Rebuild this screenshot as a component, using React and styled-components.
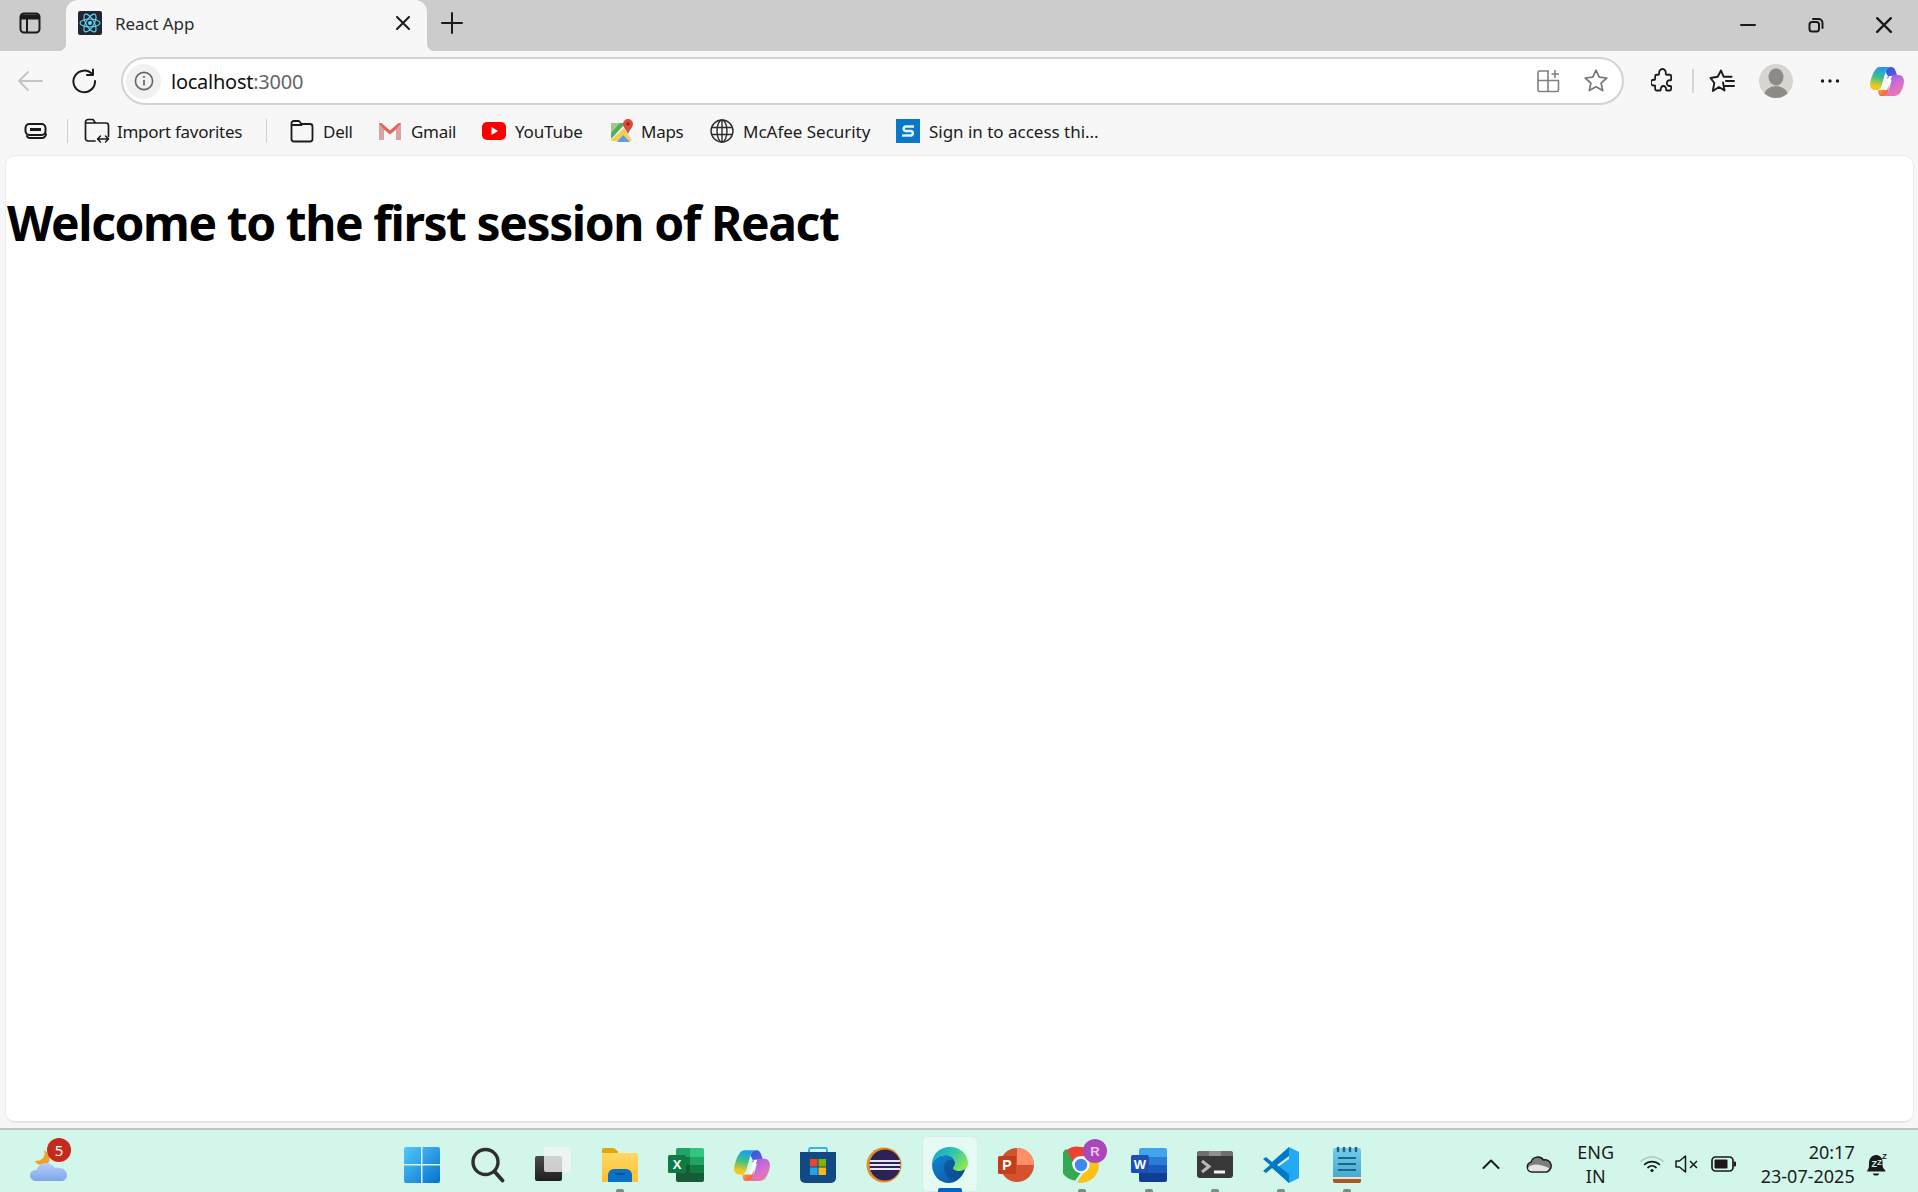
import React from "react";
import styled, { createGlobalStyle } from "styled-components";

const Global = createGlobalStyle`
  html, body { margin: 0; padding: 0; height: 100%; background: #f7f7f7; }
  body { font-family: "Noto Sans", "Open Sans", sans-serif; overflow: hidden; }
`;

const Page = styled.div`
  height: 1192px;
  display: flex;
  flex-direction: column;
`;

const TitleBar = styled.div`
  height: 51px;
  background: #cccccc;
  display: flex;
  align-items: stretch;
  flex: none;
`;

const Slot = styled.div`
  width: ${(p) => p.$w}px;
  margin-left: ${(p) => p.$ml || 0}px;
  margin-right: ${(p) => p.$mr || 0}px;
  padding-bottom: ${(p) => p.$pb || 0}px;
  flex: none;
  display: flex;
  align-items: center;
  justify-content: center;
`;

const Tab = styled.div`
  width: 361px;
  margin-left: 6px;
  background: #f7f7f7;
  border-radius: 12px 12px 0 0;
  display: flex;
  align-items: center;
  padding: 0 0 5px 12px;
  box-sizing: border-box;
  position: relative;
  &::before, &::after {
    content: "";
    position: absolute;
    bottom: 0;
    width: 8px;
    height: 8px;
  }
  &::before { left: -8px; background: radial-gradient(circle at 0 0, transparent 8px, #f7f7f7 8.5px); }
  &::after { right: -8px; background: radial-gradient(circle at 100% 0, transparent 8px, #f7f7f7 8.5px); }
`;

const TabTitle = styled.span`
  margin-left: 13px;
  flex: 1;
  font-size: 17px;
  color: #2b2b2b;
  letter-spacing: -0.1px;
`;

const WindowControls = styled.div`
  margin-left: auto;
  display: flex;
`;

const Toolbar = styled.div`
  height: 56px;
  flex: none;
  display: flex;
  align-items: center;
  padding: 4px 4px 0 3px;
  box-sizing: border-box;
`;

const AddressBar = styled.div`
  width: 1503px;
  height: 48px;
  margin-left: 10px;
  flex: none;
  box-sizing: border-box;
  background: #fff;
  border: 2px solid #d2d2d2;
  border-radius: 24px;
  display: flex;
  align-items: center;
  padding-left: 3px;
`;

const InfoBadge = styled.div`
  width: 35px;
  height: 35px;
  border-radius: 50%;
  background: #f1f1f1;
  display: flex;
  align-items: center;
  justify-content: center;
  flex: none;
`;

const Url = styled.div`
  margin-left: 10px;
  font-size: 20px;
  color: #111;
  letter-spacing: -0.25px;
  span { color: #666; }
`;

const AddressIcons = styled.div`
  margin-left: auto;
  display: flex;
`;

const ToolbarSep = styled.div`
  width: 2px;
  height: 24px;
  margin-left: 8px;
  background: #d5d5d5;
  flex: none;
`;

const BookmarkBar = styled.div`
  height: 48px;
  flex: none;
  display: flex;
  align-items: center;
  padding-left: 24px;
`;

const BarSep = styled.div`
  width: 1px;
  height: 24px;
  background: #cfcfcf;
  margin: 0 ${(p) => p.$r}px 0 ${(p) => p.$l}px;
  flex: none;
`;

const Bookmark = styled.div`
  width: ${(p) => p.$w}px;
  flex: none;
  display: flex;
  align-items: center;
  gap: ${(p) => p.$gap || 9}px;
  font-size: 17px;
  color: #1c1c1c;
  letter-spacing: ${(p) => p.$ls ?? -0.28}px;
  white-space: nowrap;
`;

const Content = styled.main`
  flex: 1;
  margin: 0 4px 5px 5px;
  background: #fff;
  border: 1px solid #ececec;
  border-bottom: 2px solid #e6e6e6;
  border-radius: 10px;
  overflow: hidden;
`;

const Heading = styled.h1`
  margin: 34px 0 0;
  padding-left: 1px;
  font-size: 48px;
  line-height: 65px;
  font-weight: 700;
  color: #000;
  letter-spacing: -1.42px;
  white-space: nowrap;
`;

const Taskbar = styled.footer`
  height: 64px;
  flex: none;
  box-sizing: border-box;
  background: #d3f6ea;
  border-top: 2px solid #b5c9c1;
  display: flex;
  align-items: stretch;
`;

const WeatherArea = styled.div`
  width: 389px;
  flex: none;
  padding: 18px 0 0 30px;
  box-sizing: border-box;
`;

const Weather = styled.div`
  width: 40px;
  height: 36px;
  position: relative;
`;

const Badge = styled.span`
  position: absolute;
  left: 17px;
  top: -10px;
  width: 24px;
  height: 24px;
  border-radius: 50%;
  background: #c42b1c;
  color: #fff;
  font-size: 15px;
  line-height: 24px;
  text-align: center;
`;

const TaskButton = styled.div`
  width: 66.05px;
  flex: none;
  position: relative;
  display: flex;
  align-items: center;
  justify-content: center;
  padding-top: 7px;
  box-sizing: border-box;
  ${(p) =>
    p.$active &&
    `&::before {
      content: "";
      position: absolute;
      left: 5px;
      right: 5px;
      top: 6px;
      bottom: 0;
      background: #e6faf4;
      border: 1px solid #d8efe7;
      border-radius: 6px;
      box-sizing: border-box;
    }`}
  svg { position: relative; }
`;

const RunDot = styled.span`
  position: absolute;
  bottom: 0;
  left: 50%;
  height: ${(p) => (p.$active ? 4 : 3)}px;
  width: ${(p) => (p.$active ? 24 : 8)}px;
  margin-left: ${(p) => (p.$active ? -12 : -4)}px;
  background: ${(p) => (p.$active ? "#0067c0" : "#7f8c88")};
  border-radius: 2px 2px 0 0;
`;

const Tray = styled.div`
  flex: 1;
  display: flex;
  align-items: stretch;
  padding-top: 5px;
`;

const TrayText = styled.div`
  width: ${(p) => p.$w}px;
  flex: none;
  display: flex;
  flex-direction: column;
  justify-content: center;
  text-align: ${(p) => p.$align};
  font-size: 18px;
  line-height: 24px;
  color: #1c1c1c;
  white-space: nowrap;
`;

const line = { fill: "none", stroke: "#1a1a1a", strokeWidth: 2, strokeLinecap: "round", strokeLinejoin: "round" };

const SidebarIcon = () => (
  <svg width="22" height="22" viewBox="0 0 22 22">
    <rect x="1.500" y="1.500" width="19" height="19" rx="3.500" {...line} />
    <path d="M2 2.500h18v5H2z" fill="#1a1a1a" />
    <path d="M8 7v13" {...line} />
  </svg>
);

const ReactFavicon = () => (
  <svg width="24" height="24" viewBox="0 0 24 24">
    <rect width="24" height="24" rx="2" fill="#23272f" />
    <g fill="none" stroke="#61dafb" strokeWidth="1.100">
      <ellipse cx="12" cy="12" rx="10" ry="4" />
      <ellipse cx="12" cy="12" rx="10" ry="4" transform="rotate(60 12 12)" />
      <ellipse cx="12" cy="12" rx="10" ry="4" transform="rotate(120 12 12)" />
    </g>
    <circle cx="12" cy="12" r="2" fill="#61dafb" />
  </svg>
);

const CloseIcon = ({ size = 14 }) => (
  <svg width={size} height={size} viewBox="0 0 14 14">
    <path d="M1 1l12 12M13 1L1 13" {...line} />
  </svg>
);

const PlusIcon = () => (
  <svg width="22" height="22" viewBox="0 0 22 22">
    <path d="M11 1v20M1 11h20" {...line} />
  </svg>
);

const MinIcon = () => (
  <svg width="16" height="4" viewBox="0 0 16 4">
    <path d="M1 2h14" {...line} />
  </svg>
);

const RestoreIcon = () => (
  <svg width="16" height="16" viewBox="0 0 16 16">
    <rect x="1.500" y="5" width="9.500" height="9.500" rx="2.500" {...line} />
    <path d="M5 2h5.500A4 4 0 0 1 14.500 6v5" {...line} />
  </svg>
);

const BackIcon = () => (
  <svg width="26" height="22" viewBox="0 0 26 22">
    <path d="M25 11H2M11 2l-9 9 9 9" fill="none" stroke="#c4c4c4" strokeWidth="1.800" strokeLinecap="round" strokeLinejoin="round" />
  </svg>
);

const ReloadIcon = () => (
  <svg width="26" height="26" viewBox="0 0 26 26">
    <path d="M21.500 6.500A10.800 10.800 0 1 0 24 13" {...line} />
    <path d="M22 1.500v5.500h-6" {...line} />
  </svg>
);

const InfoIcon = () => (
  <svg width="20" height="20" viewBox="0 0 20 20">
    <circle cx="10" cy="10" r="8.600" fill="none" stroke="#666" strokeWidth="1.600" />
    <path d="M10 9v5.500" stroke="#666" strokeWidth="1.700" />
    <circle cx="10" cy="6" r="1.100" fill="#666" />
  </svg>
);

const TilesIcon = () => (
  <svg width="24" height="24" viewBox="0 0 24 24" fill="none" stroke="#808080" strokeWidth="1.600" strokeLinejoin="round">
    <path d="M13 2H3.500A1.500 1.500 0 0 0 2 3.500V21a1.500 1.500 0 0 0 1.500 1.500H21a1.500 1.500 0 0 0 1.500-1.500V11.500H2M12 2v20.500" />
    <path d="M19 1v8M15.500 5h7.500" />
  </svg>
);

const StarIcon = ({ color = "#777" }) => (
  <svg width="26" height="26" viewBox="0 0 26 26">
    <path d="M13 2.200l3.200 7 7.600.8-5.700 5.100 1.600 7.500L13 18.800l-6.700 3.800 1.600-7.500L2.200 10l7.600-.8z" fill="none" stroke={color} strokeWidth="1.700" strokeLinejoin="round" />
  </svg>
);

const PuzzleIcon = () => (
  <svg width="22" height="26" viewBox="0 0 24 26" preserveAspectRatio="none">
    <path d="M9 5.500a3.600 3.600 0 1 1 7 0c0 .8.5 1.200 1 1.200h3.500A1.500 1.500 0 0 1 22 8.200v3.300c0 .6-.6 1-1.100.8a2.900 2.900 0 1 0 0 5.600c.5-.2 1.100.2 1.100.8v2.300a1.500 1.500 0 0 1-1.500 1.500h-3.200c-.6 0-1-.5-.9-1a2.900 2.900 0 1 0-5.700 0c.1.5-.3 1-.9 1H6a1.500 1.500 0 0 1-1.500-1.500v-2.800c0-.5-.5-1-1-.8a2.900 2.900 0 1 1 0-5.600c.5.2 1-.3 1-.8V8.200A1.500 1.500 0 0 1 6 6.700h2c.6 0 1-.5 1-1.200z" fill="none" stroke="#1a1a1a" strokeWidth="1.900" strokeLinejoin="round" />
  </svg>
);

const FavoritesIcon = () => (
  <svg width="26" height="26" viewBox="0 0 26 26">
    <path d="M12 2.500l2.600 6.200h8M14 14.500l1.500 8-5.500-3.500-6.200 4 1.500-8L1.500 10l7.200-1.300L12 2.500" fill="none" stroke="#1a1a1a" strokeWidth="1.900" strokeLinejoin="round" strokeLinecap="round" />
    <path d="M17 13h8M16 18h9" {...line} />
  </svg>
);

const Avatar = () => (
  <svg width="34" height="34" viewBox="0 0 34 34">
    <defs>
      <clipPath id="av"><circle cx="17" cy="17" r="17" /></clipPath>
    </defs>
    <circle cx="17" cy="17" r="17" fill="#d6d5d2" />
    <g clipPath="url(#av)" fill="#8e8a85">
      <ellipse cx="17" cy="13" rx="7.500" ry="8.500" />
      <ellipse cx="17" cy="32" rx="12" ry="10" />
    </g>
  </svg>
);

const DotsIcon = () => (
  <svg width="20" height="4" viewBox="0 0 20 4" fill="#1a1a1a">
    <circle cx="2.500" cy="2" r="1.700" />
    <circle cx="10" cy="2" r="1.700" />
    <circle cx="17.500" cy="2" r="1.700" />
  </svg>
);

const CopilotIcon = ({ id, w = 34, h = 30 }) => (
  <svg width={w} height={h} viewBox="0 0 34 30">
    <defs>
      <linearGradient id={id + "a"} x1="0.500" y1="0" x2="0.300" y2="1">
        <stop offset="0" stopColor="#1b9af5" />
        <stop offset="0.45" stopColor="#3cc08a" />
        <stop offset="0.85" stopColor="#f2c81d" />
      </linearGradient>
      <linearGradient id={id + "b"} x1="0" y1="0" x2="1" y2="0.800">
        <stop offset="0" stopColor="#1a5fe0" />
        <stop offset="1" stopColor="#7b55e0" />
      </linearGradient>
      <linearGradient id={id + "d"} x1="0.200" y1="0" x2="0.800" y2="1">
        <stop offset="0" stopColor="#9a5fe6" />
        <stop offset="0.6" stopColor="#d86fd0" />
        <stop offset="1" stopColor="#f27a9a" />
      </linearGradient>
      <linearGradient id={id + "c"} x1="0" y1="0" x2="1" y2="1">
        <stop offset="0" stopColor="#ffb14a" />
        <stop offset="1" stopColor="#f0503c" />
      </linearGradient>
    </defs>
    <path d="M15.500 6C16.500 3 18 1 21 1c3 0 4 2 5 5l2 6-8 2z" fill={`url(#${id}b)`} />
    <path d="M16 12l4-2c3-1 4-1 7-1h2c3 0 5 3 5 6 0 4-2 9-4 12-1.500 2-3.500 3-6 3H13c3 0 4.500-2 5.500-5L22 13z" fill={`url(#${id}d)`} />
    <path d="M8 24h6l4.500-4 0 5C17.500 28 16 30 13 30h-2c-2 0-3-2.500-3-6z" fill={`url(#${id}c)`} />
    <path d="M10 1h12c-4 0-5.500 2-6.500 5L11.500 20C10.800 22.500 9 24 6.500 24H5c-3 0-5-2.500-5-5 0-3 2-10 4-13 1.500-3 3-5 6-5z" fill={`url(#${id}a)`} />
    <path d="M19 10h3l-5 14h-3z" fill="#fff" />
  </svg>
);

const CollectionsIcon = () => (
  <svg width="24" height="24" viewBox="0 0 24 24">
    <rect x="1.500" y="5" width="20" height="11" rx="4" {...line} />
    <path d="M6 10.500h11" stroke="#1a1a1a" strokeWidth="3" />
    <path d="M3 17c.5 1.500 1.500 2 3 2h12c2 0 3.500-1.500 4-4" {...line} />
  </svg>
);

const ImportFavIcon = () => (
  <svg width="26" height="26" viewBox="0 0 26 26">
    <path d="M11 23H4a2.500 2.500 0 0 1-2.500-2.500V4A2.500 2.500 0 0 1 4 1.500h5l2.500 3.500H22A2.500 2.500 0 0 1 24.500 7.500v11M1.500 5h10" {...line} strokeWidth="1.700" />
    <path d="M14 21h10M16.500 18l-3 3 3 3M21.500 18l3 3-3 3" {...line} strokeWidth="1.500" />
  </svg>
);

const FolderIcon = () => (
  <svg width="24" height="24" viewBox="0 0 24 24">
    <path d="M1.500 5V20a2.500 2.500 0 0 0 2.500 2.500h16a2.500 2.500 0 0 0 2.500-2.500V7.500A2.500 2.500 0 0 0 20 5H11.500L9 2H4a2.500 2.500 0 0 0-2.500 3zM1.500 6h10" {...line} strokeWidth="1.800" />
  </svg>
);

const GmailIcon = () => (
  <svg width="24" height="22" viewBox="0 0 24 22">
    <path d="M1 3v17h5V9.500l6 5 6-5V20h5V3h-2.500L12 10.500 3.500 3z" fill="#e2645a" />
    <path d="M6 9.500V20H1V3z" fill="#d1d1d1" opacity="0.6" />
    <path d="M18 9.500V20h5V3z" fill="#d1d1d1" opacity="0.6" />
  </svg>
);

const YoutubeIcon = () => (
  <svg width="24" height="18" viewBox="0 0 24 18">
    <rect width="24" height="18" rx="5" fill="#f00" />
    <path d="M9.500 5l6.500 4-6.500 4z" fill="#fff" />
  </svg>
);

const MapsIcon = () => (
  <svg width="24" height="24" viewBox="0 0 24 24">
    <path d="M1 4h15L1 20z" fill="#4fae5f" />
    <path d="M1 4h9L1 14z" fill="#a5c98d" />
    <path d="M1 21L14 9l8 13H3a2 2 0 0 1-2-1z" fill="#f2d04e" />
    <path d="M7 23l6-7 7 7z" fill="#5b9bea" />
    <path d="M18 0a5 5 0 0 1 5 5c0 3.500-3 5-5 10-2-5-5-6.500-5-10a5 5 0 0 1 5-5z" fill="#dd4b3e" />
    <circle cx="18" cy="5" r="1.800" fill="#8d2a22" />
  </svg>
);

const GlobeIcon = () => (
  <svg width="24" height="24" viewBox="0 0 24 24" fill="none" stroke="#2b2b2b" strokeWidth="1.400">
    <circle cx="12" cy="12" r="11" />
    <ellipse cx="12" cy="12" rx="5" ry="11" />
    <path d="M12 1v22M1.500 8.500h21M1.500 15.500h21" />
  </svg>
);

const SharepointIcon = () => (
  <svg width="24" height="24" viewBox="0 0 24 24">
    <rect width="24" height="24" fill="#0a78c6" />
    <path d="M18 7.500H9.500a2.300 2.300 0 0 0 0 4.500h5.500a2.300 2.300 0 0 1 0 4.500H6" fill="none" stroke="#e6f2fb" strokeWidth="2.600" />
  </svg>
);

const WeatherIcon = () => (
  <svg width="38" height="36" viewBox="0 0 38 36">
    <defs>
      <linearGradient id="cl" x1="0" y1="0" x2="0" y2="1">
        <stop offset="0" stopColor="#b3d0fa" />
        <stop offset="1" stopColor="#7fa6e8" />
      </linearGradient>
    </defs>
    <path d="M14 2c2 6-1 11-9 11C7 18 14 18 18 15c4-3 0-11-4-13z" fill="#f3a02a" />
    <path d="M7 33C3 33 0 31 0 27.500 0 24 3 21.500 6.500 22 8 17.500 12 15 16 15c4 0 7 2 9 5 3-1 12 0 12 7 0 4-3 6-6 6z" fill="url(#cl)" />
  </svg>
);

const WindowsIcon = () => (
  <svg width="36" height="36" viewBox="0 0 36 36">
    <defs>
      <linearGradient id="win" x1="0" y1="0" x2="1" y2="1">
        <stop offset="0" stopColor="#52c8fb" />
        <stop offset="1" stopColor="#0671cf" />
      </linearGradient>
    </defs>
    <path d="M2 0h15v17H0V2a2 2 0 0 1 2-2zM18.500 0H34a2 2 0 0 1 2 2v15H18.500zM0 18.500h17V36H2a2 2 0 0 1-2-2zM18.500 18.500H36V34a2 2 0 0 1-2 2H18.500z" fill="url(#win)" />
  </svg>
);

const SearchIcon = () => (
  <svg width="34" height="36" viewBox="0 0 34 36" fill="none" stroke="#2e2e2e" strokeLinecap="round">
    <circle cx="14.500" cy="15" r="12.500" strokeWidth="3.400" />
    <path d="M23.500 24.500l8 9" strokeWidth="3.800" />
  </svg>
);

const TaskViewIcon = () => (
  <svg width="38" height="36" viewBox="0 0 38 36">
    <defs>
      <linearGradient id="tv" x1="0" y1="0" x2="0" y2="1">
        <stop offset="0" stopColor="#4a4a4a" />
        <stop offset="1" stopColor="#1f1f1f" />
      </linearGradient>
    </defs>
    <rect x="0" y="9" width="27" height="25" rx="2" fill="url(#tv)" />
    <rect x="9" y="0" width="27" height="25" rx="2" fill="#f4f4f4" opacity="0.8" />
  </svg>
);

const ExplorerIcon = () => (
  <svg width="36" height="34" viewBox="0 0 36 34">
    <defs>
      <linearGradient id="fo" x1="0" y1="0" x2="0" y2="1">
        <stop offset="0" stopColor="#ffd763" />
        <stop offset="1" stopColor="#fcc22e" />
      </linearGradient>
    </defs>
    <path d="M0 2a2 2 0 0 1 2-2h10l4 3.500V8H0z" fill="#e1a60a" />
    <path d="M0 5h34a2 2 0 0 1 2 2v27H0z" fill="url(#fo)" />
    <path d="M6 34v-7a6 6 0 0 1 6-6h12a6 6 0 0 1 6 6v7z" fill="#0870c8" />
    <path d="M13 26h10" stroke="#054f94" strokeWidth="2" />
  </svg>
);

const ExcelIcon = () => (
  <svg width="36" height="34" viewBox="0 0 36 34">
    <path d="M8 2a2 2 0 0 1 2-2h12v9H8z" fill="#21a366" />
    <path d="M22 0h12a2 2 0 0 1 2 2v7H22z" fill="#33c481" />
    <rect x="8" y="9" width="14" height="8" fill="#107c41" />
    <rect x="22" y="9" width="14" height="8" fill="#21a366" />
    <rect x="8" y="17" width="14" height="8" fill="#185c37" />
    <rect x="22" y="17" width="14" height="8" fill="#107c41" />
    <path d="M8 25h28v7a2 2 0 0 1-2 2H10a2 2 0 0 1-2-2z" fill="#185c37" />
    <rect x="0" y="7" width="18" height="18" rx="1.500" fill="#0f7b44" />
    <text x="9" y="21" textAnchor="middle" fontFamily="Liberation Sans" fontWeight="700" fontSize="13" fill="#fff">X</text>
  </svg>
);

const StoreIcon = () => (
  <svg width="36" height="36" viewBox="0 0 36 36">
    <path d="M9 6V3a2 2 0 0 1 2-2h14a2 2 0 0 1 2 2v3" fill="none" stroke="#35b5ee" strokeWidth="2" />
    <path d="M0 5h36v26a5 5 0 0 1-5 5H5a5 5 0 0 1-5-5z" fill="#134a83" />
    <rect x="10" y="12" width="7.500" height="7.500" fill="#e8472d" />
    <rect x="18.500" y="12" width="7.500" height="7.500" fill="#7db800" />
    <rect x="10" y="20.500" width="7.500" height="7.500" fill="#1ea5ed" />
    <rect x="18.500" y="20.500" width="7.500" height="7.500" fill="#fcb712" />
  </svg>
);

const EclipseIcon = () => (
  <svg width="36" height="36" viewBox="0 0 36 36">
    <circle cx="18" cy="18" r="17.500" fill="#e58d2a" />
    <circle cx="19" cy="18" r="15.500" fill="#2c2255" />
    <path d="M4 14h30M3.500 18h31M4 22h30" stroke="#e8e6f2" strokeWidth="1.800" />
  </svg>
);

const EdgeIcon = () => (
  <svg width="36" height="36" viewBox="0 0 36 36">
    <defs>
      <linearGradient id="ed1" x1="0" y1="0" x2="1" y2="0.600">
        <stop offset="0" stopColor="#0f9ed8" />
        <stop offset="0.55" stopColor="#2fc7ac" />
        <stop offset="1" stopColor="#86e651" />
      </linearGradient>
      <linearGradient id="ed2" x1="0" y1="0" x2="0.700" y2="1">
        <stop offset="0" stopColor="#1285d0" />
        <stop offset="1" stopColor="#0b5aa5" />
      </linearGradient>
    </defs>
    <path d="M0 17C0 7 8 0 18 0c10 0 18 7 18 16 0 5-4 8-9 8-4 0-6-2-6-3 0-1 2-2 2-5 0-4-4-8-9-8C7 8 2 12 0 17z" fill="url(#ed1)" />
    <path d="M0 17c2-5 7-9 14-9 5 0 9 4 9 8 0 3-2 4-2 5 0 1 2 3 6 3 2 0 4-.5 6-2-2 8-9 14-16 14C7 36 0 28 0 17z" fill="url(#ed2)" />
    <path d="M12 20c0-5 4-8 8-7 2 .5 3 2 3 3 0 3-2 4-2 5 0 1 2 3 6 3 2 0 4-.5 6-2-1 4-3 7-6 9-2 1-5 2-7 2-5-2-8-8-8-13z" fill="#0c3f7f" opacity="0.5" />
  </svg>
);

const PowerpointIcon = () => (
  <svg width="36" height="34" viewBox="0 0 36 34">
    <circle cx="19" cy="17" r="17" fill="#d35230" />
    <path d="M19 0a17 17 0 0 1 17 17H19z" fill="#ff8f6b" />
    <rect x="0" y="8" width="18" height="18" rx="1.500" fill="#c43e1c" />
    <text x="9" y="22" textAnchor="middle" fontFamily="Liberation Sans" fontWeight="700" fontSize="14" fill="#fff">P</text>
  </svg>
);

const ChromeIcon = () => (
  <svg width="46" height="44" viewBox="0 0 46 44" style={{ marginTop: -8, marginLeft: 8 }}>
    <path d="M18 8a18 18 0 0 1 15.600 9H18a9 9 0 0 0-8.500 6L3 11.500A18 18 0 0 1 18 8z" fill="#ea4335" />
    <path d="M3 11.500L9.500 23A9 9 0 0 0 18 35l-6 8.200A18 18 0 0 1 3 11.500z" fill="#34a853" transform="translate(0 -1.500)" />
    <path d="M33.600 17a18 18 0 0 1-19.600 26.500L20.500 34a9 9 0 0 0 5.500-12 9 9 0 0 0-3-5z" fill="#fbc116" />
    <circle cx="18" cy="26" r="8" fill="#fff" />
    <circle cx="18" cy="26" r="6.200" fill="#4285f4" />
    <circle cx="32" cy="12" r="12" fill="#ab47bc" />
    <text x="32" y="17" textAnchor="middle" fontFamily="Liberation Sans" fontWeight="700" fontSize="13" fill="#e7c8ee">R</text>
  </svg>
);

const WordIcon = () => (
  <svg width="36" height="34" viewBox="0 0 36 34">
    <path d="M8 2a2 2 0 0 1 2-2h24a2 2 0 0 1 2 2v7H8z" fill="#41a5ee" />
    <rect x="8" y="9" width="28" height="8" fill="#2b7cd3" />
    <rect x="8" y="17" width="28" height="8" fill="#185abd" />
    <path d="M8 25h28v7a2 2 0 0 1-2 2H10a2 2 0 0 1-2-2z" fill="#103f91" />
    <rect x="0" y="7" width="18" height="18" rx="1.500" fill="#1a50b8" />
    <text x="9" y="21" textAnchor="middle" fontFamily="Liberation Sans" fontWeight="700" fontSize="13" fill="#fff">W</text>
  </svg>
);

const TerminalIcon = () => (
  <svg width="36" height="28" viewBox="0 0 36 28">
    <rect width="36" height="27" rx="3" fill="#383838" />
    <path d="M3 0h9v5H0V3a3 3 0 0 1 3-3z" fill="#6e6e6e" />
    <rect x="12" y="0" width="12" height="5" fill="#8f8f8f" />
    <path d="M24 0h9a3 3 0 0 1 3 3v2H24z" fill="#6e6e6e" />
    <path d="M5 10l7 5.500-7 5.500" fill="none" stroke="#b9b9b9" strokeWidth="3" />
    <path d="M17 21h11" stroke="#f2f2f2" strokeWidth="3" />
  </svg>
);

const VscodeIcon = () => (
  <svg width="36" height="36" viewBox="0 0 36 36">
    <path d="M26 0l10 5v26l-10 5-14-14 14-10z" fill="#23a9f2" />
    <path d="M26 0L9 15 3 10 0 12l7 6-7 6 3 2 6-5 17 15V27L14 18 26 9z" fill="#0078c8" />
  </svg>
);

const NotepadIcon = () => (
  <svg width="28" height="36" viewBox="0 0 28 36">
    <defs>
      <linearGradient id="np" x1="0" y1="0" x2="0" y2="1">
        <stop offset="0" stopColor="#76cdec" />
        <stop offset="1" stopColor="#48a9cf" />
      </linearGradient>
    </defs>
    <path d="M0 30h28v4a2 2 0 0 1-2 2H2a2 2 0 0 1-2-2z" fill="#a85a20" />
    <rect y="29" width="28" height="3" fill="#e8e2da" />
    <path d="M2 1h24a2 2 0 0 1 2 2v27H0V3a2 2 0 0 1 2-2z" fill="url(#np)" />
    <path d="M5 0v4M11 0v4M17 0v4M23 0v4" stroke="#1d5f7c" strokeWidth="2.400" strokeLinecap="round" />
    <path d="M5 11h18M5 17h18M5 23h18" stroke="#17688c" strokeWidth="2" />
  </svg>
);

const ChevronUp = () => (
  <svg width="18" height="10" viewBox="0 0 18 10">
    <path d="M1.500 9L9 1.500 16.500 9" {...line} />
  </svg>
);

const OneDriveIcon = () => (
  <svg width="26" height="18" viewBox="0 0 26 18">
    <path d="M6 17a5 5 0 0 1-1-9.800A7 7 0 0 1 17.500 5a5.500 5.500 0 0 1 3 12z" fill="#7d7d7d" stroke="#1a1a1a" strokeWidth="1.400" />
    <path d="M6 16.300A4.300 4.300 0 0 1 2 13c5-5 11-4 21 0a4 4 0 0 1-2.500 3.300z" fill="#e4e4e4" />
  </svg>
);

const WifiIcon = () => (
  <svg width="24" height="18" viewBox="0 0 24 18" fill="none" strokeLinecap="round">
    <path d="M1 6.500a16 16 0 0 1 22 0" stroke="#b4c4bd" strokeWidth="1.500" />
    <path d="M4.500 9.500a11 11 0 0 1 15 0" stroke="#1a1a1a" strokeWidth="1.700" />
    <path d="M8 12.500a6 6 0 0 1 8 0" stroke="#1a1a1a" strokeWidth="1.700" />
    <circle cx="12" cy="15.500" r="1.600" fill="#1a1a1a" />
  </svg>
);

const MutedIcon = () => (
  <svg width="24" height="18" viewBox="0 0 24 18" fill="none" stroke="#1a1a1a" strokeWidth="1.500" strokeLinejoin="round">
    <path d="M1 6v6h3.500l6 5V1l-6 5z" />
    <path d="M15 6l7 7M22 6l-7 7" />
  </svg>
);

const BatteryIcon = () => (
  <svg width="26" height="16" viewBox="0 0 26 16">
    <rect x="1" y="1" width="21" height="14" rx="3.500" fill="none" stroke="#1a1a1a" strokeWidth="1.700" />
    <rect x="3.500" y="3.500" width="13" height="9" rx="1" fill="#1a1a1a" />
    <path d="M23 5.500h1a1 1 0 0 1 1 1v3a1 1 0 0 1-1 1h-1z" fill="#1a1a1a" />
  </svg>
);

const BellIcon = () => (
  <svg width="22" height="24" viewBox="0 0 22 24">
    <path d="M1.500 18c1.500-1.500 1.500-3 1.500-6.500C3 6.500 6 3 10 3c3.500 0 6 2.500 6.500 6v3c0 3 .5 4.500 2.500 6l.5 1.500H1z" fill="#1a1a1a" />
    <path d="M7 21.500h6a3 2 0 0 1-6 0z" fill="#1a1a1a" />
    <text x="5.500" y="15" fontFamily="Liberation Sans" fontWeight="700" fontSize="9" fill="#d3f6ea">Z</text>
    <text x="11" y="13" fontFamily="Liberation Sans" fontWeight="700" fontSize="8" fill="#d3f6ea">Z</text>
    <text x="16" y="7" fontFamily="Liberation Sans" fontWeight="700" fontSize="8" fill="#1a1a1a">Z</text>
  </svg>
);

const bookmarks = [
  { label: "Dell", icon: <FolderIcon />, w: 88 },
  { label: "Gmail", icon: <GmailIcon />, w: 104 },
  { label: "YouTube", icon: <YoutubeIcon />, w: 128, ls: -0.15 },
  { label: "Maps", icon: <MapsIcon />, w: 100, gap: 7 },
  { label: "McAfee Security", icon: <GlobeIcon />, w: 186, ls: -0.02 },
  { label: "Sign in to access thi...", icon: <SharepointIcon />, w: 210, ls: -0.02 },
];

const taskIcons = [
  { icon: <WindowsIcon /> },
  { icon: <SearchIcon /> },
  { icon: <TaskViewIcon /> },
  { icon: <ExplorerIcon />, running: true },
  { icon: <ExcelIcon /> },
  { icon: <CopilotIcon id="cp2" w={36} h={32} /> },
  { icon: <StoreIcon /> },
  { icon: <EclipseIcon /> },
  { icon: <EdgeIcon />, active: true, running: true },
  { icon: <PowerpointIcon /> },
  { icon: <ChromeIcon />, running: true },
  { icon: <WordIcon />, running: true },
  { icon: <TerminalIcon />, running: true },
  { icon: <VscodeIcon />, running: true },
  { icon: <NotepadIcon />, running: true },
];

export default function App() {
  return (
    <Page>
      <Global />
      <TitleBar>
        <Slot $w={60} $pb={5}><SidebarIcon /></Slot>
        <Tab>
          <ReactFavicon />
          <TabTitle>React App</TabTitle>
          <Slot $w={48}><CloseIcon /></Slot>
        </Tab>
        <Slot $w={50} $pb={5}><PlusIcon /></Slot>
        <WindowControls>
          <Slot $w={68} $pb={2}><MinIcon /></Slot>
          <Slot $w={68} $pb={2}><RestoreIcon /></Slot>
          <Slot $w={68} $pb={2}><CloseIcon size={16} /></Slot>
        </WindowControls>
      </TitleBar>

      <Toolbar>
        <Slot $w={54}><BackIcon /></Slot>
        <Slot $w={54}><ReloadIcon /></Slot>
        <AddressBar>
          <InfoBadge><InfoIcon /></InfoBadge>
          <Url>localhost<span>:3000</span></Url>
          <AddressIcons>
            <Slot $w={48}><TilesIcon /></Slot>
            <Slot $w={48} $mr={2}><StarIcon /></Slot>
          </AddressIcons>
        </AddressBar>
        <Slot $w={44} $ml={16}><PuzzleIcon /></Slot>
        <ToolbarSep />
        <Slot $w={44} $ml={6}><FavoritesIcon /></Slot>
        <Slot $w={54} $ml={5}><Avatar /></Slot>
        <Slot $w={54}><DotsIcon /></Slot>
        <Slot $w={54} $ml={3}><CopilotIcon id="cp1" /></Slot>
      </Toolbar>

      <BookmarkBar>
        <CollectionsIcon />
        <BarSep $l={19} $r={16} />
        <Bookmark $w={182} $gap={7}><ImportFavIcon />Import favorites</Bookmark>
        <BarSep $l={0} $r={23} />
        {bookmarks.map((b) => (
          <Bookmark key={b.label} $w={b.w} $ls={b.ls} $gap={b.gap}>{b.icon}{b.label}</Bookmark>
        ))}
      </BookmarkBar>

      <Content>
        <Heading>Welcome to the first session of React</Heading>
      </Content>

      <Taskbar>
        <WeatherArea>
          <Weather>
            <WeatherIcon />
            <Badge>5</Badge>
          </Weather>
        </WeatherArea>
        {taskIcons.map((t, i) => (
          <TaskButton key={i} $active={t.active}>
            {t.icon}
            {t.running && <RunDot $active={t.active} />}
          </TaskButton>
        ))}
        <Tray>
          <Slot $w={40} $ml={91}><ChevronUp /></Slot>
          <Slot $w={56}><OneDriveIcon /></Slot>
          <TrayText $w={58} $align="center"><div>ENG</div><div>IN</div></TrayText>
          <Slot $w={40} $ml={7}><WifiIcon /></Slot>
          <Slot $w={30}><MutedIcon /></Slot>
          <Slot $w={44}><BatteryIcon /></Slot>
          <TrayText $w={109} $align="right"><div>20:17</div><div>23-07-2025</div></TrayText>
          <Slot $w={28} $ml={8}><BellIcon /></Slot>
        </Tray>
      </Taskbar>
    </Page>
  );
}
